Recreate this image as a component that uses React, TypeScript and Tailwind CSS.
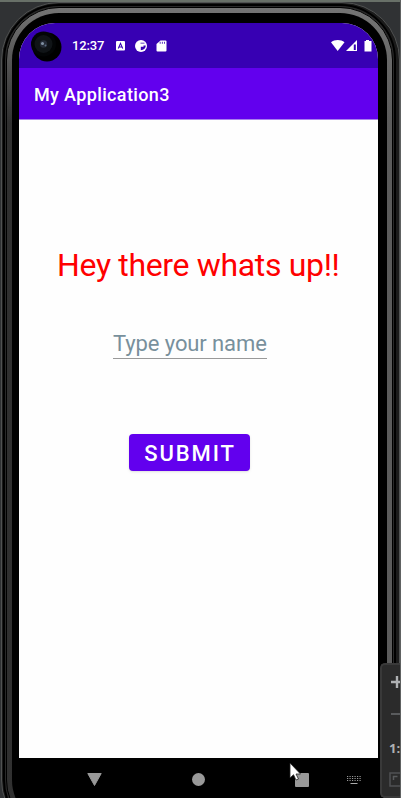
import React from "react";

function StatusBar() {
  return (
    <div className="flex h-[45px] items-center bg-[#3700b3] pl-[12px] pr-[5px] text-white">
      <svg className="h-[32px] w-[32px] shrink-0" viewBox="0 0 32 32">
        <circle cx="16" cy="17" r="14.5" fill="#000" />
        <circle cx="12.5" cy="14" r="12.5" fill="#030506" />
        <circle cx="12.5" cy="14" r="9" fill="#101417" />
        <circle cx="12.5" cy="14" r="3.7" fill="#252b36" />
        <circle cx="11.5" cy="13.5" r="1.5" fill="#8191a4" />
        <circle cx="14.5" cy="15.5" r="1" fill="#596a80" />
      </svg>
      <span className="ml-[9px] w-[44px] text-[13px] font-medium leading-none tracking-[-0.15px]">12:37</span>
      <svg className="h-[12px] w-[51px]" viewBox="0 0 51 12">
        <rect x="0" y="1" width="9" height="9.5" rx="1" fill="#fff" />
        <path d="M2.3 8.5 4.5 3.4 6.7 8.5M3 7h3" fill="none" stroke="#3700b3" strokeWidth="1.1" />
        <circle cx="25" cy="6" r="6" fill="#fff" />
        <path d="M24.8 6.8h2.7V5.4h2.3c0 2.6-1.8 4.5-5 4.9z" fill="#3700b3" />
        <path d="M24.5 2.7h4v.9h-4z" fill="#3700b3" />
        <path d="M44.5.5h5q1 0 1 1v9q0 1-1 1h-8q-1 0-1-1V4z" fill="#fff" />
        <path d="M44.2 1.8v2M46.4 1.8v2M48.5 1.8v2" stroke="#3700b3" strokeWidth=".8" />
      </svg>
      <svg className="ml-auto h-[13px] w-[42px]" viewBox="0 0 42 13">
        <path d="M0 3.3C3.5.2 10 .2 13.5 3.3L6.7 12z" fill="#fff" />
        <path d="M15 12 26 1v11z" fill="#fff" />
        <path d="M22.8 5.5h2V11h-2z" fill="#3700b3" />
        <path d="M35 1h3v1h2.5v10.5h-7V2H35z" fill="#fff" />
      </svg>
    </div>
  );
}

function NavigationBar() {
  return (
    <div className="flex h-[41px] items-center pl-[68px] pt-[2px]">
      <svg className="h-[13px] w-[15px]" viewBox="0 0 15 13">
        <path d="M.8.5h13.4L7.5 12.5z" fill="#999" stroke="#999" strokeLinejoin="round" />
      </svg>
      <div className="ml-[90px] h-[13px] w-[13px] rounded-full bg-[#999]" />
      <div className="ml-[90px] h-[14px] w-[14px] rounded-[1px] bg-[#999]" />
      <svg className="ml-[37px] h-[9px] w-[16px]" viewBox="0 0 16 9">
        <path d="M1 1.5h14M1 3.5h14M1 5.5h14" stroke="#999" strokeWidth="1" strokeDasharray="1.2 1.3" />
        <path d="M4.5 8.5h7" stroke="#aaa" />
      </svg>
    </div>
  );
}

function EmulatorTools() {
  return (
    <aside className="absolute left-[380px] top-[663px] flex h-[135px] w-[21px] flex-col overflow-hidden rounded-l-[5px] border-2 border-r-0 border-[#393939] bg-[#2b2b2b]">
      <svg className="h-[75px] w-[19px]" viewBox="0 0 19 75">
        <path d="M9 17h12M15 11v12" stroke="#afb1b3" strokeWidth="2.4" />
        <path d="M9 49h12" stroke="#595b5d" strokeWidth="1.8" />
      </svg>
      <span className="pl-[7px] pt-px font-['Open_Sans'] text-[13px] font-bold leading-[14px] text-[#afb1b3]">1:</span>
      <svg className="h-[41px] w-[19px]" viewBox="0 90 19 41">
        <rect x="8" y="108" width="18" height="13" fill="none" stroke="#505254" strokeWidth="1.5" />
        <path d="M11.5 115v-3.5h4" fill="none" stroke="#595b5d" strokeWidth="1.5" />
      </svg>
    </aside>
  );
}

export default function App() {
  return (
    <div className="relative h-[798px] w-[401px] overflow-hidden border-r border-[#606262] bg-[#303234] font-[Roboto,sans-serif]">
      <div className="h-[2px] bg-[#687068]" />
      <div className="ml-px h-[836px] w-[399px] rounded-[58px] border border-[#505252] bg-[#1b1b1b] p-[1px] pr-[3px]">
        <div className="h-full rounded-[56px] border-2 border-black bg-[#292929] p-px">
          <div className="h-full rounded-[53px] border border-black bg-[linear-gradient(to_bottom,#747474,transparent_14%),linear-gradient(to_right,#303030,#5c5c5c)] p-[5px]">
            <div className="h-full rounded-[47px] bg-black pl-[7px] pr-[9px] pt-[10px]">
              <main className="h-[735px] overflow-hidden rounded-t-[36px] bg-[#fefefe]">
                <StatusBar />
                <header className="flex h-[52px] items-center border-b border-[#a980ed] bg-[#6200ee] pl-[15px] pt-[2px] text-[18px] font-medium tracking-[0.36px] text-white">My Application3</header>
                <div className="flex flex-col">
                  <h1 className="ml-[38px] mt-[126px] whitespace-nowrap text-[32px] font-normal leading-[38px] tracking-[-0.34px] text-[#ff0000]">Hey there whats up!!</h1>
                  <div className="ml-[94px] mt-[46px] h-[29px] w-[154px] whitespace-nowrap border-b border-[#999] pt-px text-[22px] leading-[26px] tracking-[-0.1px] text-[#78909c]">Type your name</div>
                  <button className="ml-[110px] mt-[75px] flex h-[37px] w-[121px] items-center justify-center rounded-[4px] bg-[#6200ee] pl-[1px] pt-[2px] text-[22px] font-medium tracking-[1.9px] text-white shadow-sm">SUBMIT</button>
                </div>
              </main>
              <NavigationBar />
            </div>
          </div>
        </div>
      </div>
      <EmulatorTools />
      <svg className="absolute left-[289px] top-[762px] h-[19px] w-[12px]" viewBox="0 0 12 19">
        <path d="M1 1v15l3.5-3.3L7 18l2.5-1L7 12h4.5z" fill="#fff" stroke="#222" strokeWidth=".8" />
      </svg>
    </div>
  );
}
